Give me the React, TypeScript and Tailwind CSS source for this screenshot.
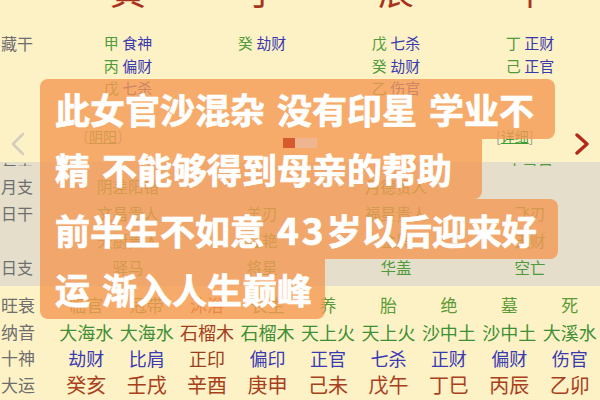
import React from "react";

const G4 = "grid grid-cols-[61px_repeat(4,134px)]";
const G9 = "grid grid-cols-[56px_repeat(9,1fr)]";

const canggan: [string, string][][] = [
  [["甲", "食神"], ["丙", "偏财"], ["戊", "七杀"]],
  [["癸", "劫财"]],
  [["戊", "七杀"], ["癸", "劫财"], ["乙", "伤官"]],
  [["丁", "正财"], ["己", "正官"]],
];

const shensha: { label: string; cells: string[] }[] = [
  { label: "月支", cells: ["阴差阳错", "", "月德贵人", ""] },
  { label: "日干", cells: ["文昌贵人", "羊刃", "福星贵人", "飞刃"] },
  { label: "", cells: ["天厨贵人", "红艳", "金舆", "天财"] },
  { label: "日支", cells: ["驿马", "将星", "华盖", "空亡"] },
];

const wangshuai = ["临官", "冠带", "沐浴", "长生", "养", "胎", "绝", "墓", "死"];
const nayin = ["大海水", "大海水", "石榴木", "石榴木", "天上火", "天上火", "沙中土", "沙中土", "大溪水"];
const shishen = ["劫财", "比肩", "正印", "偏印", "正官", "七杀", "正财", "偏财", "伤官"];
const dayun = ["癸亥", "壬戌", "辛酉", "庚申", "己未", "戊午", "丁巳", "丙辰", "乙卯"];

export default function App() {
  const boxBase =
    "h-[60px] bg-[rgba(244,152,82,0.8)] pl-[15px] text-[35px] leading-[60px] font-bold text-white whitespace-nowrap [word-spacing:4px] [-webkit-text-stroke:0.7px_white]";
  return (
    <div className="relative w-[600px] h-[400px] overflow-hidden bg-[#fdf2c6] font-['Noto_Sans_CJK_SC','Noto_Sans',sans-serif]">
      {/* pillar characters (cut off at top) */}
      <div className={`${G4} h-[44px] mt-[-33px] text-[36px] leading-[44px] text-[#a8321c] text-center`}>
        <div />
        <div>寅</div>
        <div>子</div>
        <div>辰</div>
        <div>午</div>
      </div>

      {/* 藏干 */}
      <div className={`${G4} mt-[21px] text-[15px] leading-[22.5px]`}>
        <div className="text-[16px] text-[#6e6e6e] pl-[1px]">藏干</div>
        {canggan.map((col, i) => (
          <div key={i} className="flex justify-center">
            <div>
              {col.map(([s, g], j) => (
                <div key={j} className="whitespace-nowrap">
                  <span className="text-[#4f9a3a]">{s}</span>
                  <span> </span>
                  <span className="text-[#3a3ab0]">{g}</span>
                </div>
              ))}
            </div>
          </div>
        ))}
      </div>

      {/* header row */}
      <div className={`${G4} h-[62.5px]`}>
        <div className="pl-[10px] pt-[32px]">
          <svg width="15" height="24" viewBox="0 0 15 24">
            <polyline points="13,2 3,12 13,22" fill="none" stroke="#d2cdbf" strokeWidth="2.6" strokeLinecap="round" strokeLinejoin="round" />
          </svg>
        </div>
        <div className="pl-[14px] pt-[28px] text-[14px] leading-[16px] whitespace-nowrap">
          <span className="text-[#9a9a9a]">〔</span>
          <span className="text-[#4f9a3a] underline">阴阳</span>
          <span className="text-[#9a9a9a]">〕</span>
        </div>
        <div />
        <div />
        <div className="flex">
          <div className="ml-[33px] pt-[28px] text-[14px] leading-[16px] whitespace-nowrap">
            <span className="text-[#9a9a9a]">[</span>
            <span className="text-[#3f9a3a] underline">详细</span>
            <span className="text-[#9a9a9a]">]</span>
          </div>
          <div className="ml-auto mr-[7px] pt-[33px]">
            <svg width="16" height="22" viewBox="0 0 16 22">
              <polyline points="3,2 13,11 3,20" fill="none" stroke="#b2281a" strokeWidth="3.4" strokeLinecap="round" strokeLinejoin="round" />
            </svg>
          </div>
        </div>
      </div>

      {/* 神煞 gray band */}
      <div className="h-[124px] bg-[#e4decb] overflow-hidden text-[15.5px]">
        <div className={`${G4} h-[4px] overflow-hidden items-end leading-[16px]`}>
          <div className="text-[16px] text-[#6e6e6e] pl-[1px]">年支</div>
          <div />
          <div />
          <div />
          <div className="text-center text-[#4f9a3a]">十灵日</div>
        </div>
        <div className="pt-[7px]">
          {shensha.map((row, i) => (
            <div key={i} className={`${G4} h-[27px] items-center leading-[27px]`}>
              <div className="text-[16px] text-[#6e6e6e] pl-[1px]">{row.label}</div>
              {row.cells.map((c, j) => (
                <div key={j} className="text-center text-[#4f9a3a] whitespace-nowrap">
                  {c}
                </div>
              ))}
            </div>
          ))}
        </div>
      </div>

      {/* bottom rows */}
      <div className="pt-[6px]">
        <div className={`${G9} h-[26.5px] items-center leading-[26.5px]`}>
          <div className="text-[17px] text-[#6e6e6e] pl-[1px]">旺衰</div>
          {wangshuai.map((t, i) => (
            <div key={i} className={`text-center text-[17px] ${t === "沐浴" ? "text-[#c4451e]" : "text-[#5e9a36]"}`}>
              {t}
            </div>
          ))}
        </div>
        <div className={`${G9} h-[26.5px] items-center leading-[26.5px]`}>
          <div className="text-[17px] text-[#6e6e6e] pl-[1px]">纳音</div>
          {nayin.map((t, i) => (
            <div key={i} className={`text-center text-[18px] whitespace-nowrap ${i === 2 ? "text-[#a3401c]" : "text-[#3f8f35]"}`}>
              {t}
            </div>
          ))}
        </div>
        <div className={`${G9} h-[26.5px] items-center leading-[26.5px]`}>
          <div className="text-[17px] text-[#6e6e6e] pl-[1px]">十神</div>
          {shishen.map((t, i) => (
            <div key={i} className={`text-center text-[18px] ${t === "正印" ? "text-[#9a3e1c]" : "text-[#3a3ab4]"}`}>
              {t}
            </div>
          ))}
        </div>
        <div className={`${G9} h-[26.5px] items-center leading-[26.5px]`}>
          <div className="text-[17px] text-[#6e6e6e] pl-[1px]">大运</div>
          {dayun.map((t, i) => (
            <div key={i} className="text-center text-[20px] text-[#a8401c]">
              {t}
            </div>
          ))}
        </div>
      </div>

      {/* caption overlay */}
      <div className="absolute left-[40px] top-[79px] flex flex-col items-start">
        <div className={`${boxBase} w-[515px] rounded-tl-[8px] rounded-tr-[8px] rounded-br-[8px]`}>
          此女官沙混杂 没有印星 学业不
        </div>
        <div className={`${boxBase} w-[442px] rounded-br-[8px]`}>精 不能够得到母亲的帮助</div>
        <div className={`${boxBase} w-[518px] rounded-tr-[8px] rounded-br-[8px]`}>
          前半生不如意 <span className="text-[37px] tracking-[3px]">43</span>岁以后迎来好
        </div>
        <div className={`${boxBase} w-[285px] rounded-br-[8px] rounded-bl-[8px]`}>运 渐入人生巅峰</div>
      </div>

      {/* progress indicator */}
      <div className="absolute left-[283px] top-[138px] flex">
        <div className="w-[12px] h-[10px] bg-[#d65a2e]" />
        <div className="w-[22px] h-[10px] bg-[#eeb690]" />
      </div>
    </div>
  );
}
